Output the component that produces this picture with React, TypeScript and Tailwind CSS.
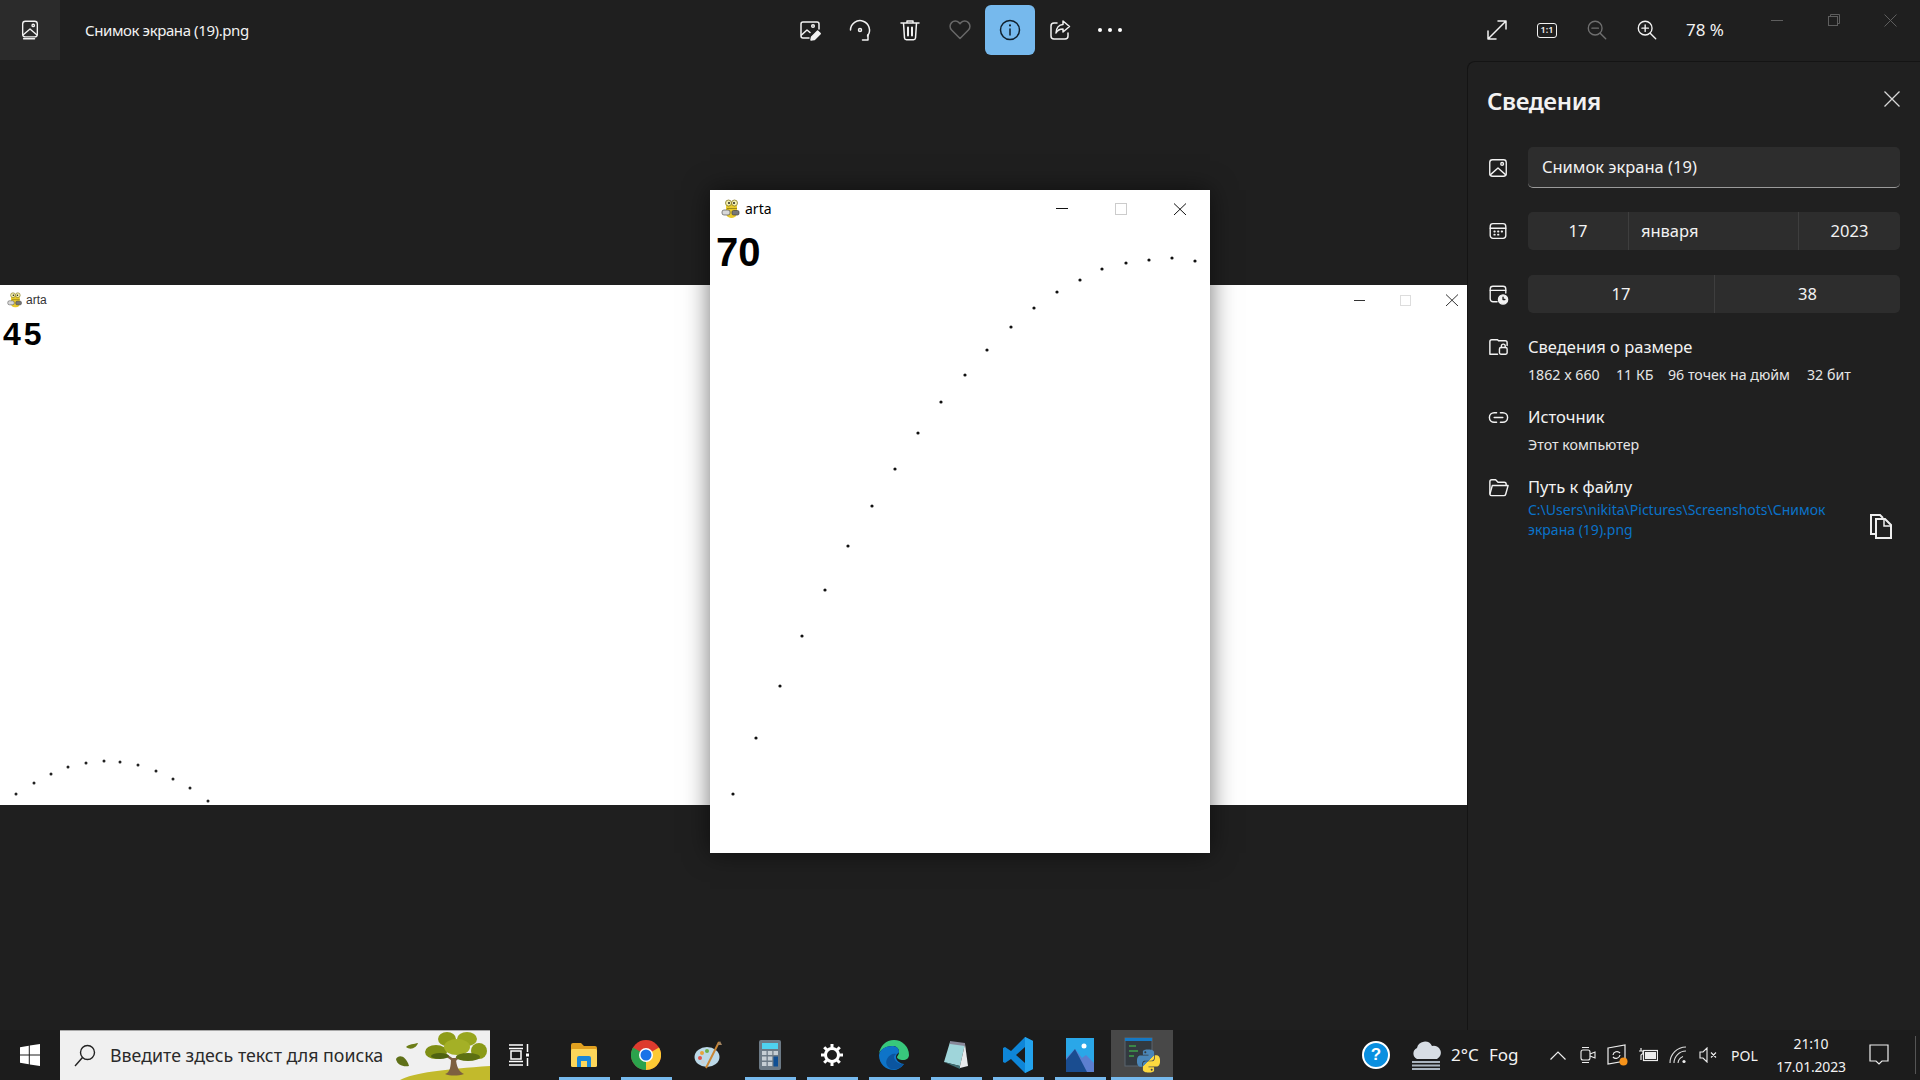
import React from "react";

const wideDots = [[16, 509], [34, 498], [51, 489], [68, 482], [86, 478], [104, 476], [120, 477], [138, 480], [156, 486], [173, 494], [190, 503], [208, 516]];
const tallDots = [[23, 604], [46, 548], [70, 496], [92, 446], [115, 400], [138, 356], [162, 316], [185, 279], [208, 243], [231, 212], [255, 185], [277, 160], [301, 137], [324, 118], [347, 102], [370, 90], [392, 79], [416, 73], [439, 70], [462, 68], [485, 71]];

const pythonPath = "M14.25.18l.9.2.73.26.59.3.45.32.34.34.25.34.16.33.1.3.04.26.02.2-.01.13V8.5l-.05.63-.13.55-.21.46-.26.38-.3.31-.33.25-.35.19-.35.14-.33.1-.3.07-.26.04-.21.02H8.77l-.69.05-.59.14-.5.22-.41.27-.33.32-.27.35-.2.36-.15.37-.1.35-.07.32-.04.27-.02.21v3.06H3.17l-.21-.03-.28-.07-.32-.12-.35-.18-.36-.26-.36-.36-.35-.46-.32-.59-.28-.73-.21-.88-.14-1.05-.05-1.23.06-1.22.16-1.04.24-.87.32-.71.36-.57.4-.44.42-.33.42-.24.4-.16.36-.1.32-.05.24-.01h.16l.06.01h8.16v-.83H6.18l-.01-2.75-.02-.37.05-.34.11-.31.17-.28.25-.26.31-.23.38-.2.44-.18.51-.15.58-.12.64-.1.71-.06.77-.04.84-.02 1.27.05zm-6.3 1.98l-.23.33-.08.41.08.41.23.34.33.22.41.09.41-.09.33-.22.23-.34.08-.41-.08-.41-.23-.33-.33-.22-.41-.09-.41.09zm13.09 3.95l.28.06.32.12.35.18.36.27.36.35.35.47.32.59.28.73.21.88.14 1.04.05 1.23-.06 1.23-.16 1.04-.24.86-.32.71-.36.57-.4.45-.42.33-.42.24-.4.16-.36.09-.32.05-.24.02-.16-.01h-8.22v.82h5.84l.01 2.76.02.36-.05.34-.11.31-.17.29-.25.25-.31.24-.38.2-.44.17-.51.15-.58.13-.64.09-.71.07-.77.04-.84.01-1.27-.04-1.07-.14-.9-.2-.73-.25-.59-.3-.45-.33-.34-.34-.25-.34-.16-.33-.1-.3-.04-.25-.02-.2.01-.13v-5.34l.05-.64.13-.54.21-.46.26-.38.3-.32.33-.24.35-.2.35-.14.33-.1.3-.06.26-.04.21-.02.13-.01h5.84l.69-.05.59-.14.5-.21.41-.28.33-.32.27-.35.2-.36.15-.36.1-.35.07-.32.04-.28.02-.21V6.07h2.09l.14.01zm-6.47 14.25l-.23.33-.08.41.08.41.23.33.33.23.41.08.41-.08.33-.23.23-.33.08-.41-.08-.41-.23-.33-.33-.23-.41-.08-.41.08z";

const Ico = ({ children, size = 22, className = "" }: { children: React.ReactNode; size?: number; className?: string }) => (
  <svg width={size} height={size} viewBox="0 0 24 24" fill="none" stroke="currentColor" strokeWidth="1.5" strokeLinecap="round" strokeLinejoin="round" className={className}>
    {children}
  </svg>
);

const PhotoGlyph = () => (
  <>
    <rect x="3" y="3" width="18" height="18" rx="3" />
    <path d="M3.5 19.5 12 12l8.500 7.500" />
    <circle cx="16.500" cy="7.500" r="1.500" />
  </>
);

const PygameIcon = ({ size }: { size: number }) => (
  <svg width={size} height={size} viewBox="0 0 20 20">
    <rect x="5" y="3" width="11" height="16" rx="5" fill="#e8c92a" />
    <circle cx="7.500" cy="4" r="3" fill="#f2eeb0" stroke="#7a6c10" strokeWidth="0.7" />
    <circle cx="13.500" cy="4" r="3" fill="#f2eeb0" stroke="#7a6c10" strokeWidth="0.7" />
    <circle cx="8" cy="4" r="1" fill="#222" />
    <circle cx="13" cy="4" r="1" fill="#222" />
    <path d="M6 9.500h10" stroke="#8a7a10" strokeWidth="0.8" />
    <rect x="1" y="11" width="8" height="5" rx="2" fill="#d8d8d8" stroke="#555" strokeWidth="0.7" />
    <rect x="11" y="11.500" width="7" height="4.500" rx="1.500" fill="#777" stroke="#444" strokeWidth="0.7" />
  </svg>
);

const WinClose = ({ dark }: { dark: boolean }) => (
  <svg width="12" height="12" viewBox="0 0 12 12" stroke={dark ? "#111" : "#333"} strokeWidth="1" fill="none">
    <path d="M0 0.500 12 12M12 0.500 0 12" />
  </svg>
);

const TaskSlot = ({ children, running = false, active = false }: { children: React.ReactNode; running?: boolean; active?: boolean }) => (
  <div className={`relative w-[62px] h-[50px] flex items-center justify-center ${active ? "bg-[#484848]" : ""}`}>
    {children}
    {running && <div className={`absolute bottom-0 h-[3px] bg-[#76b9ed] ${active ? "left-0 right-0" : "left-[6px] right-[5px]"}`} />}
  </div>
);

const Tree = () => (
  <svg width="95" height="48" viewBox="0 0 95 48">
    <path d="M5 48C18 41 50 37 95 34V48Z" fill="#c2ba2c" />
    <path d="M50 42c5-1 6-8 6-16h5c0 8 3 14 8 16-6 2-14 2-19 0Z" fill="#7d6040" />
    <path d="M58 28 48 21M60 28l9-8" stroke="#7d6040" strokeWidth="2.500" />
    <ellipse cx="41" cy="20" rx="11" ry="7" fill="#7f8f14" />
    <ellipse cx="52" cy="7" rx="9" ry="7" fill="#8e9c18" />
    <ellipse cx="72" cy="7" rx="10" ry="7" fill="#98a61e" />
    <ellipse cx="84" cy="19" rx="8" ry="8" fill="#8a9a18" />
    <ellipse cx="62" cy="15" rx="13" ry="8" fill="#a4b026" />
    <ellipse cx="45" cy="24" rx="9" ry="3" fill="#4f6210" />
    <ellipse cx="73" cy="25" rx="12" ry="4" fill="#5d7012" />
    <path d="M1 27c3-5 10-3 13 7-6 1-12-1-13-7Z" fill="#5f7018" />
    <path d="M11 15c3-3 8-3 12-4-1 4-7 8-12 4Z" fill="#6c7d18" />
  </svg>
);

export default function App() {
  return (
    <div className="w-[1920px] h-[1080px] overflow-hidden flex flex-col bg-[#1f1f1f] text-[#f2f2f2] font-['Noto_Sans',sans-serif]">
      {/* top bar */}
      <div className="h-[60px] shrink-0 flex">
        <div className="w-[785px] flex items-center">
          <div className="w-[60px] h-[60px] bg-[#2b2b2b] flex items-center justify-center">
            <Ico size={22}><rect x="4" y="2.500" width="16" height="17" rx="3" /><path d="M5 21.500h12" /><path d="M5 17l7-6 7 6" /><circle cx="15.500" cy="7" r="1.300" /></Ico>
          </div>
          <span className="ml-[25px] text-[15px] tracking-[-0.4px]">Снимок экрана (19).png</span>
        </div>
        <div className="flex items-center">
          {[
            <Ico key="e" size={24}><path d="M11 20H5a2 2 0 0 1-2-2V6a2 2 0 0 1 2-2h14a2 2 0 0 1 2 2v5" /><path d="M3.500 17 9 12l3 2.500" /><circle cx="15" cy="8" r="1.300" /><path d="m13 22 .6-3 6-6 2.600 2.600-6 6Z" fill="currentColor" /></Ico>,
            <Ico key="r" size={24}><path d="M2.500 12a9.500 9.500 0 1 1 17 6" /><circle cx="12" cy="12" r="1.500" /><path d="M14.500 22h5.500v-5.500" /></Ico>,
            <Ico key="t" size={24}><path d="M3 5h18M9 5V3h6v2M5.500 5l1 15a2 2 0 0 0 2 1.800h7a2 2 0 0 0 2-1.800l1-15" /><path d="M10 9.500v8M14 9.500v8" strokeWidth="2" /></Ico>,
            <Ico key="h" size={24} className="text-[#686868]"><path d="M12 20.500 3.600 12a5.200 5.200 0 0 1 7.400-7.400l1 1 1-1a5.200 5.200 0 0 1 7.400 7.400Z" /></Ico>,
          ].map((icon, i) => (
            <div key={i} className="w-[50px] flex justify-center">{icon}</div>
          ))}
          <div className="w-[50px] h-[50px] rounded-md bg-[#76b9ed] flex items-center justify-center text-[#10202c]">
            <Ico size={24}><circle cx="12" cy="12" r="9.500" /><path d="M12 11v6" /><path d="M12 7.200v.3" strokeWidth="2" /></Ico>
          </div>
          <div className="w-[50px] flex justify-center">
            <Ico size={24}><path d="M20 15v3a3 3 0 0 1-3 3H6a3 3 0 0 1-3-3V8a3 3 0 0 1 3-3h3" /><path d="m15 3 6.500 5.500L15 14v-3c-3 0-5.500 1-7 4 0-5 3-8.500 7-8.500Z" /></Ico>
          </div>
          <div className="w-[50px] flex justify-center gap-[6px]">
            <div className="w-1 h-1 rounded-full bg-white" />
            <div className="w-1 h-1 rounded-full bg-white" />
            <div className="w-1 h-1 rounded-full bg-white" />
          </div>
        </div>
        <div className="ml-[337px] flex items-center">
          <div className="w-[50px] flex justify-center"><Ico size={24}><path d="M3 21 21 3M13 3h8v8M3 13v8h8" /></Ico></div>
          <div className="w-[50px] flex justify-center">
            <div className="w-[20px] h-[15px] border-[1.5px] border-[#f2f2f2] rounded-[3px] text-[9px] leading-[12px] font-semibold text-center">1:1</div>
          </div>
          <div className="w-[50px] flex justify-center"><Ico className="text-[#6f6f6f]"><circle cx="10" cy="10" r="7.500" /><path d="m15.500 15.500 6 6M6.500 10h7" /></Ico></div>
          <div className="w-[50px] flex justify-center"><Ico><circle cx="10" cy="10" r="7.500" /><path d="m15.500 15.500 6 6M6.500 10h7M10 6.500v7" /></Ico></div>
          <div className="w-[70px] pl-[14px] text-[17px]">78 %</div>
          <div className="ml-[6px] h-[40px] flex self-start text-[#5e5e5e]">
            <div className="w-[57px] flex items-center justify-center"><div className="w-[12px] h-px bg-[#5e5e5e]" /></div>
            <div className="w-[57px] flex items-center justify-center">
              <svg width="12" height="12" viewBox="0 0 12 12" fill="none" stroke="currentColor"><rect x="0.500" y="2.500" width="9" height="9" /><path d="M2.500 2.500v-2h9v9h-2" /></svg>
            </div>
            <div className="w-[57px] flex items-center justify-center">
              <svg width="13" height="13" viewBox="0 0 13 13" fill="none" stroke="currentColor"><path d="M0.500 0.500l12 12M12.500 0.500l-12 12" /></svg>
            </div>
          </div>
        </div>
      </div>

      {/* main */}
      <div className="flex-1 flex min-h-0">
        <div className="relative w-[1467px] shrink-0 flex items-center">
          {/* wide screenshot window */}
          <div className="relative w-full h-[520px] bg-white text-black font-['Liberation_Sans',sans-serif]">
            <div className="flex items-center h-[30px]">
              <div className="ml-[7px]"><PygameIcon size={16} /></div>
              <span className="ml-[3px] text-[12px] text-[#333]">arta</span>
              <div className="ml-auto mr-[9px] flex items-center gap-[35px]">
                <div className="w-[11px] h-px bg-[#333]" />
                <div className="w-[11px] h-[11px] border border-[#ddd]" />
                <WinClose dark={false} />
              </div>
            </div>
            <div className="ml-[3px] mt-[1px] text-[32px] leading-[36px] font-bold tracking-[3px]">45</div>
            <svg className="absolute inset-0" width="1467" height="520">
              {wideDots.map(([x, y]) => <circle key={x} cx={x} cy={y} r="1.500" fill="#222" />)}
            </svg>
          </div>
          {/* overlapping window */}
          <div className="absolute left-[710px] top-[130px] w-[500px] h-[663px] bg-white text-black font-['Liberation_Sans',sans-serif] shadow-[0_0_24px_rgba(0,0,0,0.55)]">
            <div className="flex items-center h-[37px]">
              <div className="ml-[11px]"><PygameIcon size={20} /></div>
              <span className="ml-[4px] text-[14px] font-['Noto_Sans',sans-serif]">arta</span>
              <div className="ml-auto mr-[24px] flex items-center gap-[47px]">
                <div className="w-[12px] h-px bg-[#111]" />
                <div className="w-[12px] h-[12px] border border-[#ccc]" />
                <WinClose dark />
              </div>
            </div>
            <div className="ml-[6px] mt-[2px] text-[40px] leading-[46px] font-bold">70</div>
            <svg className="absolute inset-0" width="500" height="663">
              {tallDots.map(([x, y]) => <circle key={x} cx={x} cy={y} r="1.600" fill="#111" />)}
            </svg>
          </div>
        </div>

        {/* details panel */}
        <div className="w-[453px] mt-px bg-[#202020] border-t border-l border-[#141414] rounded-tl-lg pl-[19px] pr-[20px] pt-[19px] shrink-0">
          <div className="h-[40px] flex items-center justify-between">
            <span className="text-[24px] font-semibold tracking-[-0.4px]">Сведения</span>
            <svg width="16" height="16" viewBox="0 0 16 16" fill="none" stroke="#d8d8d8" strokeWidth="1.300" className="mb-[4px]"><path d="M0.500 0.500l15 15M15.500 0.500l-15 15" /></svg>
          </div>

          <div className="mt-[26px] flex items-center">
            <div className="w-[41px]"><Ico><PhotoGlyph /></Ico></div>
            <div className="w-[373px] h-[41px] bg-[#2d2d2d] rounded-[5px] border-b border-[#9a9a9a] pl-[14px] flex items-center text-[16.5px]">Снимок экрана (19)</div>
          </div>

          <div className="mt-[24px] flex items-center">
            <div className="w-[41px]"><Ico><rect x="3.500" y="4" width="17" height="16" rx="3" /><path d="M3.500 9h17" /><path d="M8 12.500h.5M12 12.500h.5M16 12.500h.5M8 16h.5M12 16h.5" strokeWidth="2" /></Ico></div>
            <div className="w-[373px] h-[38px] bg-[#2d2d2d] rounded-[5px] flex items-center text-[16.5px]">
              <div className="w-[101px] h-full flex items-center justify-center border-r border-[#3e3e3e]">17</div>
              <div className="w-[170px] h-full pl-[12px] flex items-center border-r border-[#3e3e3e]">января</div>
              <div className="flex-1 text-center">2023</div>
            </div>
          </div>

          <div className="mt-[25px] flex items-center">
            <div className="w-[41px]"><Ico><path d="M11 20.500H6.500a3 3 0 0 1-3-3V6.500a3 3 0 0 1 3-3h11a3 3 0 0 1 3 3V11" /><path d="M3.500 8h17" /><circle cx="17.500" cy="18" r="5" fill="currentColor" /><path d="M17.500 15.500V18h2" stroke="#202020" /></Ico></div>
            <div className="w-[373px] h-[38px] bg-[#2d2d2d] rounded-[5px] flex items-center text-[16.5px]">
              <div className="w-[187px] h-full flex items-center justify-center border-r border-[#3e3e3e]">17</div>
              <div className="flex-1 text-center">38</div>
            </div>
          </div>

          <div className="mt-[23px] flex">
            <div className="w-[41px]"><Ico size={23}><path d="M21 10V7a2 2 0 0 0-2-2h-7l-1-1H5a2 2 0 0 0-2 2v13h8" /><rect x="13" y="12" width="8" height="7" rx="1.500" /><path d="M15 12v-1.500a2 2 0 0 1 4 0V12" /></Ico></div>
            <div>
              <div className="text-[16.5px] leading-[22px]">Сведения о размере</div>
              <div className="mt-[6px] flex text-[14.2px] leading-[22px] text-[#e6e6e6]">
                <span className="w-[88px]">1862 x 660</span>
                <span className="w-[52px]">11 КБ</span>
                <span className="w-[139px]">96 точек на дюйм</span>
                <span>32 бит</span>
              </div>
            </div>
          </div>

          <div className="mt-[20px] flex">
            <div className="w-[41px]"><Ico size={23}><path d="M10 7H7.500a5 5 0 0 0 0 10H10M14 7h2.500a5 5 0 0 1 0 10H14M7.500 12h9" /></Ico></div>
            <div>
              <div className="text-[16.5px] leading-[22px]">Источник</div>
              <div className="mt-[6px] text-[14.2px] leading-[22px] text-[#e6e6e6]">Этот компьютер</div>
            </div>
          </div>

          <div className="mt-[20px] flex">
            <div className="w-[41px]"><Ico size={23}><path d="M3 18V6a2 2 0 0 1 2-2h4l2.500 2.500H18a2 2 0 0 1 2 2V10" /><path d="M3 19l2.500-9H22l-2.500 9a2 2 0 0 1-2 1.500H5A2 2 0 0 1 3 19Z" /></Ico></div>
            <div className="flex-1">
              <div className="text-[16.5px] leading-[22px]">Путь к файлу</div>
              <div className="mt-[2px] flex">
                <div className="w-[310px] text-[14px] leading-[20px] text-[#0a72c8]">C:\Users\nikita\Pictures\Screenshots\Снимок экрана (19).png</div>
                <div className="ml-[31px] mt-[13px]">
                  <svg width="24" height="26" viewBox="0 0 24 26" fill="none" stroke="#eeeeee" strokeWidth="2" strokeLinejoin="miter"><path d="M7 21H2V2h9l3 3" /><path d="M7 6h9l6 6v13H7Z" /><path d="M15 6v7h7" strokeWidth="1.500" /></svg>
                </div>
              </div>
            </div>
          </div>
        </div>
      </div>

      {/* taskbar */}
      <div className="h-[50px] shrink-0 flex items-center bg-[#1c1c1c]">
        <div className="w-[60px] flex justify-center">
          <svg width="20" height="22" viewBox="0 0 20 22" fill="#fff"><path d="M0 3.200 8.800 1.800v8.700H0ZM9.800 1.600 20 0v10.500H9.800ZM0 11.500h8.800v8.700L0 18.800ZM9.800 11.500H20V22l-10.200-1.600Z" /></svg>
        </div>
        <div className="relative w-[430px] h-[50px] bg-[#f0f0f0] border-t border-[#a8a8a8] flex items-center overflow-hidden">
          <svg className="ml-[14px]" width="22" height="24" viewBox="0 0 22 24" fill="none" stroke="#222" strokeWidth="1.400"><circle cx="13.500" cy="8.500" r="7" /><path d="M8.500 13.500 1 22" /></svg>
          <span className="ml-[14px] text-[17.8px] text-[#2a2a2a]">Введите здесь текст для поиска</span>
          <div className="absolute right-0 bottom-0 h-[48px]"><Tree /></div>
        </div>
        <div className="w-[63px] flex justify-start pl-[19px]">
          <svg width="20" height="24" viewBox="0 0 20 24" fill="none" stroke="#fff" strokeWidth="1.500"><path d="M0 2h14M0 22h14M2 8h10v8H2ZM0 5.500h14M0 18.500h14" /><path d="M18.500 1v8M18.500 15v8" /><rect x="17" y="10.500" width="3" height="3" fill="#fff" stroke="none" /></svg>
        </div>
        <TaskSlot running>
          <svg width="28" height="26" viewBox="0 0 28 26"><path d="M1 3a2 2 0 0 1 2-2h8l3 3h11a2 2 0 0 1 2 2v3H1Z" fill="#e0a020" /><rect x="1" y="7" width="26" height="18" rx="1.500" fill="#fcd65a" /><path d="M7 25v-9a2 2 0 0 1 2-2h10a2 2 0 0 1 2 2v9h-4v-6h-6v6Z" fill="#1a87d8" /></svg>
        </TaskSlot>
        <TaskSlot running>
          <svg width="30" height="30" viewBox="0 0 30 30">
            <circle cx="15" cy="15" r="15" fill="#dd3b2e" />
            <path d="M15 15 28 7.500A15 15 0 0 1 15 30Z" fill="#fcc934" />
            <path d="M15 15 15 30A15 15 0 0 1 2 7.500Z" fill="#2ba24c" />
            <circle cx="15" cy="15" r="7" fill="#fff" />
            <circle cx="15" cy="15" r="5.500" fill="#1a73e8" />
          </svg>
        </TaskSlot>
        <TaskSlot>
          <svg width="30" height="30" viewBox="0 0 30 30">
            <ellipse cx="14" cy="17" rx="12.500" ry="10" fill="#bcd9e8" />
            <circle cx="7" cy="18" r="2" fill="#e0534a" />
            <circle cx="9" cy="13" r="2" fill="#e8a33d" />
            <circle cx="14" cy="11" r="2" fill="#6cb04a" />
            <circle cx="10" cy="22" r="2" fill="#c9d0d4" />
            <path d="M26 2 13 28" stroke="#c98533" strokeWidth="2" />
            <path d="M24 5 27 1l2 4Z" fill="#a38460" />
          </svg>
        </TaskSlot>
        <TaskSlot running>
          <svg width="22" height="30" viewBox="0 0 22 30">
            <rect width="22" height="30" rx="2" fill="#6c7a86" />
            <rect x="3" y="3" width="16" height="6" fill="#4fd2f0" />
            <g fill="#c6ced4">
              <rect x="3" y="11" width="4.500" height="4" /><rect x="8.800" y="11" width="4.500" height="4" /><rect x="14.500" y="11" width="4.500" height="4" />
              <rect x="3" y="16.500" width="4.500" height="4" /><rect x="8.800" y="16.500" width="4.500" height="4" />
              <rect x="3" y="22" width="4.500" height="4" /><rect x="8.800" y="22" width="4.500" height="4" />
            </g>
            <rect x="14.500" y="16.500" width="4.500" height="10" fill="#0f4f94" />
          </svg>
        </TaskSlot>
        <TaskSlot running>
          <svg width="24" height="24" viewBox="0 0 24 24" fill="none" stroke="#fff" strokeWidth="3">
            <circle cx="12" cy="12" r="6.500" />
            <path d="M12 1v4M12 19v4M1 12h4M19 12h4M4.200 4.200l2.800 2.800M17 17l2.800 2.800M4.200 19.800 7 17M17 7l2.800-2.800" />
          </svg>
        </TaskSlot>
        <TaskSlot running>
          <svg width="30" height="30" viewBox="0 0 30 30">
            <path d="M15 0a15 15 0 0 1 15 15c0 3-2.500 5-6 5-3 0-6-1-6-3 0-1 2-2 2-5C20 7 16 6 13 6 7 6 1 10 0 14 1 6 7 0 15 0Z" fill="#38c87c" />
            <path d="M0 15C1 9 7 6 13 6c4 0 7 2 7 6 0 1-3 2-3 5 0 4 5 7 8 7-3 4-7 6-10 6C7 30 0 24 0 15Z" fill="#0e74c8" />
            <path d="M25 24c-4 5-9 6-13 5-4-2-6-6-4-10 2-4 6-6 9-5-1 1-2 2-2 3 0 4 6 8 10 7Z" fill="#0b559f" />
          </svg>
        </TaskSlot>
        <TaskSlot running>
          <svg width="28" height="30" viewBox="0 0 28 30">
            <path d="M8 2 23 4 18 26 2 22Z" fill="#9fd5da" />
            <path d="M23 4 26 26 18 28 18 26Z" fill="#e8eaec" />
            <path d="M8 1 23 3 23 6 8 4Z" fill="#889" />
            <path d="M2 22 18 26 18 29Z" fill="#3f6f74" />
          </svg>
        </TaskSlot>
        <TaskSlot running>
          <svg width="30" height="36" viewBox="0 0 30 36">
            <path d="M22 0 30 4V32L22 36 8 22 2 26 0 25V11L2 10 8 14Z M22 10 13 18 22 26Z" fill="#0e86d8" fillRule="evenodd" />
            <path d="M22 0 30 4V32L22 36Z" fill="#23a3ee" />
          </svg>
        </TaskSlot>
        <TaskSlot running>
          <svg width="28" height="34" viewBox="0 0 28 34">
            <rect width="28" height="34" fill="#2aa7e8" />
            <circle cx="18" cy="8" r="2.500" fill="#fff" />
            <path d="M0 34V20L9 11l7 9 4-3 8 8v9Z" fill="#5c7fd0" />
            <path d="M0 34V22L9 11l12 23Z" fill="#1a4d90" />
          </svg>
        </TaskSlot>
        <TaskSlot running active>
          <svg width="36" height="36" viewBox="0 0 36 36">
            <defs>
              <linearGradient id="py" x1="0" y1="0" x2="1" y2="1">
                <stop offset="0.5" stopColor="#4a86b8" />
                <stop offset="0.5" stopColor="#fdd93f" />
              </linearGradient>
            </defs>
            <rect x="1" y="1" width="27" height="28" fill="#333a40" stroke="#5a646e" />
            <rect x="1" y="1" width="27" height="3" fill="#1679c4" />
            <path d="M5 9h7M5 14h9M5 19h5" stroke="#3fa04a" strokeWidth="1.300" />
            <svg x="13" y="12" width="23" height="24" viewBox="0 0 24 24">
              <path d={pythonPath} fill="url(#py)" />
            </svg>
          </svg>
        </TaskSlot>

        <div className="ml-auto pr-[4px] flex items-center h-full">
          <div className="w-[32px] flex justify-center">
            <div className="w-[28px] h-[28px] rounded-full bg-[#0a8fe0] border-2 border-white flex items-center justify-center text-[17px] font-bold text-white font-['Liberation_Sans',sans-serif]">?</div>
          </div>
          <div className="ml-[17px] w-[34px] flex justify-center">
            <svg width="32" height="32" viewBox="0 0 32 32">
              <path d="M7 20a6 6 0 0 1 0-11 8 8 0 0 1 15-2 7 7 0 0 1 5 13Z" fill="#d7dde4" />
              <path d="M2 23h28M2 26.500h28M2 30h28" stroke="#a9b3be" strokeWidth="2" />
            </svg>
          </div>
          <div className="ml-[8px] w-[38px] text-[17px]">2°C</div>
          <div className="w-[54px] text-[17px]">Fog</div>
          <div className="w-[30px] flex justify-center"><svg width="16" height="9" viewBox="0 0 16 9" fill="none" stroke="#eee" strokeWidth="1.200"><path d="M.5 8.500 8 1l7.500 7.500" /></svg></div>
          <div className="w-[30px] flex justify-center"><svg width="16" height="20" viewBox="0 0 16 20" fill="none" stroke="#eee" strokeWidth="1.100"><rect x="1" y="5" width="9" height="10" rx="2" /><path d="m10 9 5-2v6l-5-2M2 2.500h7M2 17.500h7" /></svg></div>
          <div className="w-[30px] flex justify-center">
            <svg width="22" height="22" viewBox="0 0 22 22" fill="none" stroke="#eee" strokeWidth="1.200"><path d="M1 4 18 1v16L1 20Z" /><path d="M6 11a4 4 0 0 1 7-2M13 11a4 4 0 0 1-7 2" /><circle cx="16.500" cy="17.500" r="4" fill="#f7931a" stroke="none" /></svg>
          </div>
          <div className="w-[30px] flex justify-center">
            <svg width="20" height="14" viewBox="0 0 20 14" fill="none" stroke="#eee" strokeWidth="1.200"><rect x="5.500" y="2.500" width="14" height="10" /><rect x="7" y="4" width="11" height="7" fill="#eee" stroke="none" /><path d="M3 0v3M1 3h4v2.500L3 7v5" /></svg>
          </div>
          <div className="w-[30px] flex justify-center">
            <svg width="18" height="18" viewBox="0 0 18 18" fill="none" stroke="#ddd" strokeWidth="1.100"><path d="M1 17A16 16 0 0 1 17 1M5 17A12 12 0 0 1 17 5M9 17a8 8 0 0 1 5-6.500" /><circle cx="15" cy="15.500" r="1.600" fill="#eee" stroke="none" /></svg>
          </div>
          <div className="w-[30px] flex justify-center">
            <svg width="18" height="16" viewBox="0 0 18 16" fill="none" stroke="#eee" strokeWidth="1.100"><path d="M1 5h3l4-4v14l-4-4H1ZM12 5.500l5 5M17 5.500l-5 5" /></svg>
          </div>
          <div className="w-[48px] pl-[8px] text-[14px]">POL</div>
          <div className="w-[80px] text-center text-[14px] leading-[23px] tracking-[-0.2px]">
            <div>21:10</div>
            <div>17.01.2023</div>
          </div>
          <div className="ml-[8px] w-[40px] flex justify-center">
            <svg width="20" height="22" viewBox="0 0 20 22" fill="none" stroke="#eee" strokeWidth="1.200"><path d="M1 1h18v16h-6l-3 3-3-3H1Z" /></svg>
          </div>
          <div className="ml-[16px] w-px h-[38px] bg-[#555]" />
        </div>
      </div>
    </div>
  );
}
